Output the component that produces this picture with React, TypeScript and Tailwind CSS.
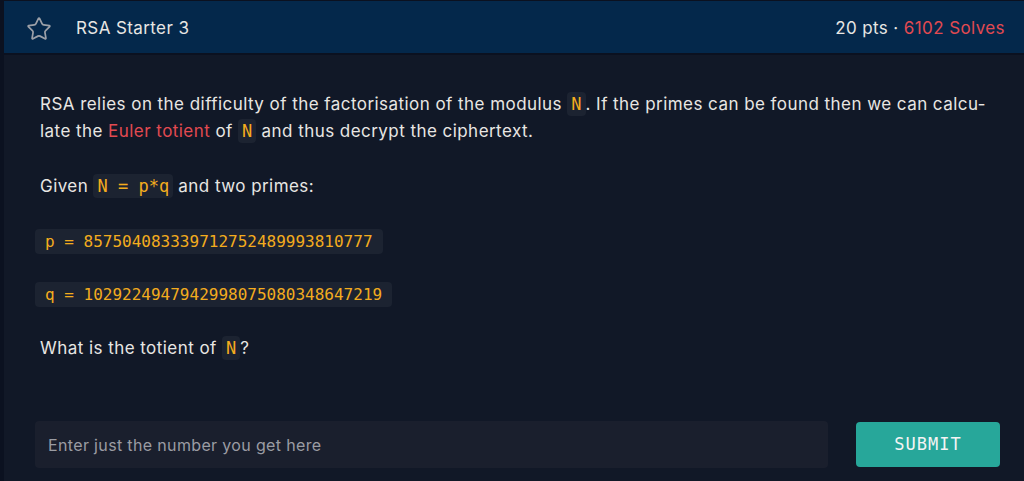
import { Star } from "lucide-react";

const code = "font-['DejaVu_Sans_Mono',monospace] tracking-normal text-[#f3ac1e] bg-[#1c2331] rounded px-1 py-[2px]";

export default function App() {
  return (
    <div className="flex h-[481px] w-[1024px] bg-[#0b1120] font-['Inter','Liberation_Sans',sans-serif] overflow-hidden">
      <div className="w-[4px]" />
      <div className="flex flex-1 flex-col bg-[#111827]">
        {/* Header */}
        <div className="flex h-[55px] items-center justify-between bg-[#04284b] pt-[3px] pl-[22px] pr-[19px] border-t border-b-2 border-[#0b1120]">
          <div className="flex items-center">
            <Star className="h-[26px] w-[26px] text-[#9ca0a8]" strokeWidth={1.6} />
            <span className="ml-[24px] text-[17px] tracking-[0.4px] text-[#e8e6e3]">RSA Starter 3</span>
          </div>
          <div className="text-[17px] tracking-[0.4px] text-[#e8e6e3]">
            20 pts · <span className="text-[#e24a51]">6102 Solves</span>
          </div>
        </div>

        {/* Body */}
        <div className="flex flex-col pl-[36px] pr-[28px] pt-[36px] text-[17px] leading-[27px] tracking-[0.45px] text-[#e8e6e3]">
          <p className="hyphens-auto" lang="en">
            RSA relies on the difficulty of the factorisation of the modulus <span className={code}>N</span>. If the primes can be found then we can calcu&shy;late the <span className="text-[#e24a51]">Euler totient</span> of <span className={code}>N</span> and thus decrypt the ciphertext.
          </p>
          <p className="mt-[28px]">
            Given <span className={code}>N = p*q</span> and two primes:
          </p>
          <div className="mt-[28px]">
            <span className={code + " -ml-[5px] px-[10px] py-[3px] text-[16px]"}>p = 857504083339712752489993810777</span>
          </div>
          <div className="mt-[26px]">
            <span className={code + " -ml-[5px] px-[10px] py-[3px] text-[16px]"}>q = 1029224947942998075080348647219</span>
          </div>
          <p className="mt-[27px]">
            What is the totient of <span className={code}>N</span>?
          </p>
        </div>

        {/* Answer */}
        <div className="mt-[59px] flex items-center gap-[28px] pl-[31px] pr-[24px]">
          <input
            className="h-[47px] flex-1 rounded bg-[#1a1f2d] px-[13px] text-[16px] tracking-[0.35px] text-[#e8e6e3] placeholder-[#9a9ca3] outline-none"
            placeholder="Enter just the number you get here"
          />
          <button className="h-[45px] w-[144px] rounded bg-[#27a79a] font-['DejaVu_Sans_Mono',monospace] text-[17px] tracking-[1px] text-[#f4f4f4]">
            SUBMIT
          </button>
        </div>
      </div>
    </div>
  );
}
